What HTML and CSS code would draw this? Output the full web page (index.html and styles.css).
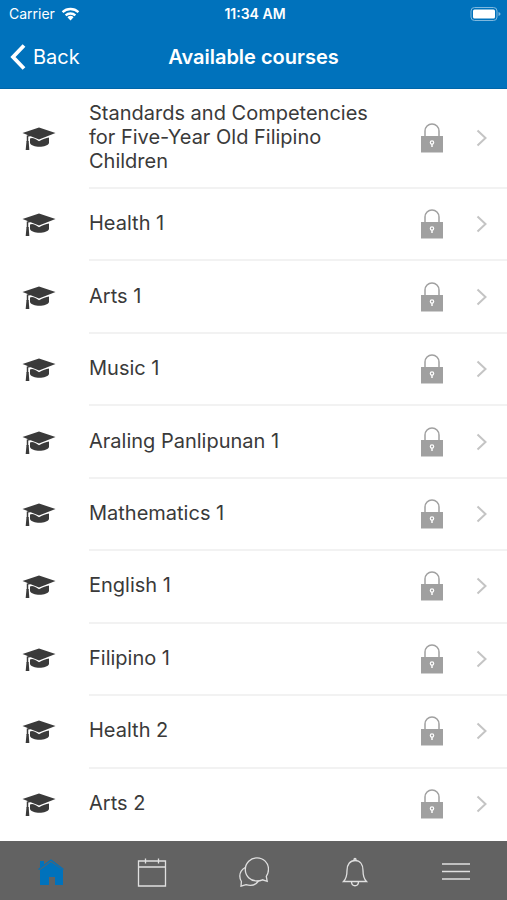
FILE: index.html
```html
<!DOCTYPE html>
<html lang="en">
<head>
    <meta charset="UTF-8">
    <meta name="viewport" content="width=device-width, initial-scale=1">
    <title>Available courses</title>
    <link rel="stylesheet" href="styles.css">
</head>
<body>
    <svg class="sprite" aria-hidden="true">
        <symbol id="cap" viewBox="0 0 34 24">
            <path d="M.5 6 17 .5 33.500 6 17 12.500z"/>
            <path d="M8 11.500c2-1 4-.8 9 2.800 4-2.300 7-3.300 10-3.800v5.500c-1 2.500-5 3.800-9.500 3.800S9 18.500 8 16z"/>
            <path d="M17 6.500 5.500 9v6" fill="none" stroke="currentColor" stroke-width="1.500"/>
            <path d="M4.500 14h2.200l.6 9H3.700z"/>
        </symbol>
        <symbol id="lock" viewBox="0 0 24 30">
            <path d="M5 14V8a7 7 0 0 1 14 0v6" fill="none" stroke="currentColor" stroke-width="1.500"/>
            <path d="M1 13h22v16.500H1z"/>
            <path d="M12 19v5" stroke="#fff" stroke-width="1.500"/>
            <circle cx="12" cy="19.500" r="1.700" fill="currentColor" stroke="#fff" stroke-width="1.200"/>
        </symbol>
        <symbol id="next" viewBox="0 0 11 18">
            <path d="m1.500 1.500 8 7.500-8 7.500" fill="none" stroke="currentColor" stroke-width="2"/>
        </symbol>
    </svg>

    <header class="header">
        <div class="status-bar">
            <span class="carrier">Carrier
                <svg class="wifi" viewBox="0 0 20 15" aria-hidden="true">
                    <path d="M1.500 5.500a12.500 12.500 0 0 1 17 0M4.800 9a7.600 7.600 0 0 1 10.400 0" fill="none" stroke="#fff" stroke-width="2.500"/>
                    <path d="M10 14.500 6.700 11a4.800 4.800 0 0 1 6.600 0z" fill="#fff"/>
                </svg>
            </span>
            <span class="time">11:34 AM</span>
            <svg class="battery" viewBox="0 0 31 14" aria-hidden="true">
                <rect x="1" y=".5" width="26" height="13" rx="3.500" fill="none" stroke="#7fb8de"/>
                <rect x="3" y="2.500" width="22" height="9" rx="1.500" fill="#fff"/>
                <path d="M28.500 5v4c1.500-.5 2-1.200 2-2s-.5-1.500-2-2z" fill="#7fb8de"/>
            </svg>
        </div>
        <div class="nav-bar">
            <button class="back" type="button">
                <svg class="back-icon" viewBox="0 0 16 26" aria-hidden="true">
                    <path d="M14 1.500 3 13l11 11.500" fill="none" stroke="#fff" stroke-width="3.800"/>
                </svg>
                Back
            </button>
            <h1 class="title">Available courses</h1>
        </div>
    </header>

    <main class="courses" id="courses"></main>

    <nav class="tab-bar">
        <a class="tab active" href="#home" aria-label="Home">
            <svg viewBox="0 0 30 30">
                <path d="M4 28V13L15 5l12 8v15h-8v-8h-6v8z" fill="currentColor"/>
                <path d="M4 4h4v4l-4 3z" fill="currentColor"/>
                <path d="M2.500 12.500 15 3l12.500 9.500" stroke="currentColor"/>
            </svg>
        </a>
        <a class="tab" href="#calendar" aria-label="Calendar">
            <svg viewBox="0 0 30 30"><path d="M1.500 4h27v25h-27zM1.500 10h27M8.500 1.500v5M21.500 1.500v5"/></svg>
        </a>
        <a class="tab" href="#messages" aria-label="Messages">
            <svg viewBox="0 0 30 30">
                <path d="M18 .8c6.500 0 11.500 5 11.500 11.500 0 3-.8 5-2.200 7l.9 5-4.700-1.500c-1.700.8-3.500 1.200-5.500 1.200-6.700 0-11.700-5-11.700-11.500S11.500.8 18 .8z"/>
                <path d="M6.300 10.500C2.800 12.500.8 15.500.8 19c0 2 .6 3.800 1.600 5.500l-.4 4.700 5-1.500c5 1.500 9.500.5 12.500-3.700"/>
            </svg>
        </a>
        <a class="tab" href="#notifications" aria-label="Notifications">
            <svg viewBox="0 0 30 30"><path d="M3.500 24.500c3-3 3.500-6 3.500-11 0-6 3-10 8-10s8 4 8 10c0 5 .5 8 3.500 11zM11.500 25c.3 5 6.700 5 7 0"/><circle cx="15" cy="2.500" r="1"/></svg>
        </a>
        <a class="tab" href="#more" aria-label="More">
            <svg viewBox="0 0 30 30"><path d="M1 7h28M1 14.500h28M1 22h28"/></svg>
        </a>
    </nav>

    <script>
        const courses = [
            "Standards and Competencies for Five-Year Old Filipino Children",
            "Health 1",
            "Arts 1",
            "Music 1",
            "Araling Panlipunan 1",
            "Mathematics 1",
            "English 1",
            "Filipino 1",
            "Health 2",
            "Arts 2"
        ];

        document.getElementById('courses').innerHTML = courses.map(name => `
            <a class="course" href="#course">
                <svg class="cap"><use href="#cap"/></svg>
                <span class="course-inner">
                    <span class="course-name">${name}</span>
                    <svg class="lock"><use href="#lock"/></svg>
                    <svg class="next"><use href="#next"/></svg>
                </span>
            </a>`).join('');
    </script>
</body>
</html>
```
FILE: styles.css
```css
* {
    box-sizing: border-box;
}
body {
    display: flex;
    flex-direction: column;
    min-height: 100vh;
    margin: 0;
    font-family: Inter, "Liberation Sans", sans-serif;
    font-size: 20px;
    line-height: 24px;
    color: #3a3a3a;
    background-color: #fff;
}
a {
    color: inherit;
    text-decoration: none;
}
svg {
    display: block;
    flex: none;
}
.sprite {
    position: absolute;
    width: 0;
    height: 0;
}
.header {
    color: #fff;
    background-color: #0072bc;
    border-bottom: 1px solid #0066a9;
}
.status-bar {
    display: grid;
    grid-template-columns: 1fr auto 1fr;
    align-items: center;
    height: 27px;
    padding: 0 6px 0 9px;
    font-size: 14px;
    line-height: 16px;
}
.carrier {
    display: flex;
    align-items: center;
    gap: 6px;
}
.wifi {
    width: 19px;
    height: 14px;
}
.time {
    font-weight: 600;
}
.battery {
    width: 31px;
    height: 14px;
    justify-self: end;
}
.nav-bar {
    display: grid;
    grid-template-columns: 1fr auto 1fr;
    align-items: center;
    height: 61px;
    padding: 0 10px 2px;
}
.back {
    display: flex;
    align-items: center;
    justify-self: start;
    gap: 7px;
    padding: 0;
    font: inherit;
    color: inherit;
    background: none;
    border: none;
    cursor: pointer;
}
.back-icon {
    width: 16px;
    height: 26px;
}
.title {
    margin: 0;
    font-size: 20px;
    font-weight: 600;
}
.courses {
    display: flex;
    flex-direction: column;
    flex: 1;
}
.course {
    display: flex;
    align-items: center;
    flex: 1 0 auto;
    min-height: 72px;
    padding-left: 22px;
}
.course:first-child {
    flex-grow: 0;
}
.cap {
    width: 34px;
    height: 24px;
    margin-right: 33px;
    fill: currentColor;
}
.course-inner {
    display: flex;
    align-items: center;
    align-self: stretch;
    flex: 1;
    padding: 12px 20px 12px 0;
    border-bottom: 2px solid #f2f2f2;
}
.course:last-child .course-inner {
    border-color: transparent;
}
.course-name {
    flex: 1;
    padding: 0 40px 2px 0;
}
.lock {
    width: 24px;
    height: 30px;
    margin-right: 32px;
    color: #a0a0a0;
    fill: currentColor;
}
.next {
    width: 11px;
    height: 18px;
    color: #c4c4c4;
}
.tab-bar {
    display: flex;
    height: 59px;
    padding-top: 3px;
    background-color: #626262;
}
.tab {
    display: flex;
    align-items: center;
    justify-content: center;
    flex: 1;
    color: #e0e0e0;
}
.tab svg {
    width: 30px;
    height: 30px;
    fill: none;
    stroke: currentColor;
    stroke-width: 1.3;
}
.tab.active {
    color: #0072bc;
}
.tab.active svg {
    stroke: none;
}
```
